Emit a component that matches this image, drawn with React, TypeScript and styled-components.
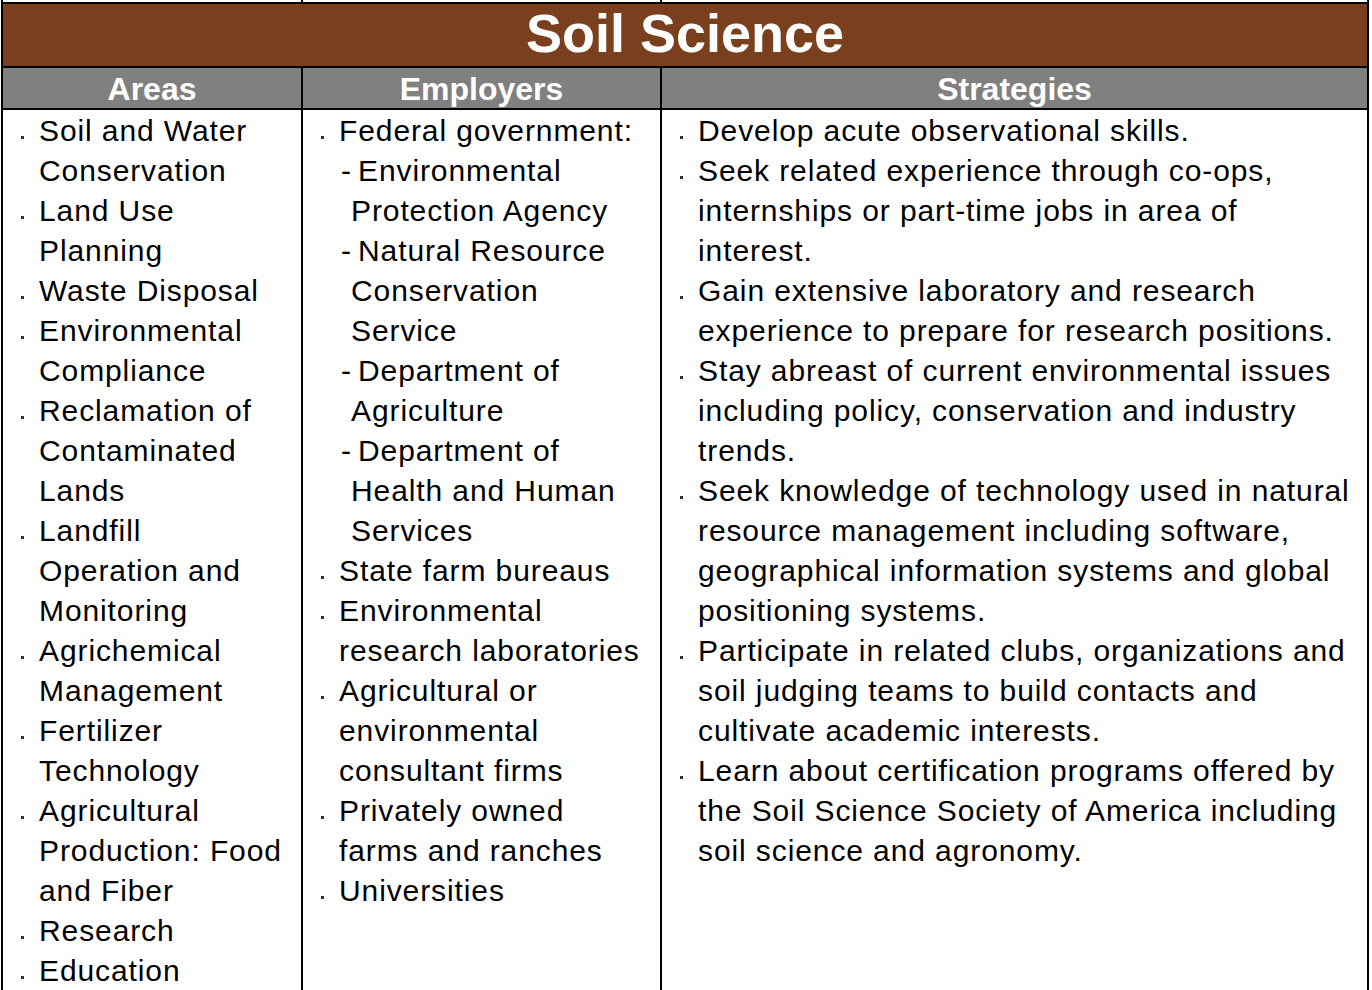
import styled, { createGlobalStyle } from 'styled-components'

type Entry = { lines: string[]; sub?: string[][] }

const areas: Entry[] = [
  { lines: ['Soil and Water', 'Conservation'] },
  { lines: ['Land Use', 'Planning'] },
  { lines: ['Waste Disposal'] },
  { lines: ['Environmental', 'Compliance'] },
  { lines: ['Reclamation of', 'Contaminated', 'Lands'] },
  { lines: ['Landfill', 'Operation and', 'Monitoring'] },
  { lines: ['Agrichemical', 'Management'] },
  { lines: ['Fertilizer', 'Technology'] },
  { lines: ['Agricultural', 'Production: Food', 'and Fiber'] },
  { lines: ['Research'] },
  { lines: ['Education'] },
]

const employers: Entry[] = [
  {
    lines: ['Federal government:'],
    sub: [
      ['Environmental', 'Protection Agency'],
      ['Natural Resource', 'Conservation', 'Service'],
      ['Department of', 'Agriculture'],
      ['Department of', 'Health and Human', 'Services'],
    ],
  },
  { lines: ['State farm bureaus'] },
  { lines: ['Environmental', 'research laboratories'] },
  { lines: ['Agricultural or', 'environmental', 'consultant firms'] },
  { lines: ['Privately owned', 'farms and ranches'] },
  { lines: ['Universities'] },
]

const strategies: Entry[] = [
  { lines: ['Develop acute observational skills.'] },
  { lines: ['Seek related experience through co-ops,', 'internships or part-time jobs in area of', 'interest.'] },
  { lines: ['Gain extensive laboratory and research', 'experience to prepare for research positions.'] },
  { lines: ['Stay abreast of current environmental issues', 'including policy, conservation and industry', 'trends.'] },
  {
    lines: [
      'Seek knowledge of technology used in natural',
      'resource management including software,',
      'geographical information systems and global',
      'positioning systems.',
    ],
  },
  { lines: ['Participate in related clubs, organizations and', 'soil judging teams to build contacts and', 'cultivate academic interests.'] },
  { lines: ['Learn about certification programs offered by', 'the Soil Science Society of America including', 'soil science and agronomy.'] },
]

const columns = [
  { title: 'Areas', items: areas },
  { title: 'Employers', items: employers },
  { title: 'Strategies', items: strategies },
]

function Lines({ lines }: { lines: string[] }) {
  return (
    <>
      {lines.map((l, i) => (
        <span key={i}>
          {i > 0 && <br />}
          {l}
        </span>
      ))}
    </>
  )
}

export default function App() {
  return (
    <>
      <GlobalStyle />
      <Page>
        <Table>
          <Strip>
            {columns.map((c, i) => (
              <StripCell key={c.title} $first={i === 0} />
            ))}
          </Strip>
          <Title>Soil Science</Title>
          <HeaderRow>
            {columns.map((c, i) => (
              <HeaderCell key={c.title} $first={i === 0}>{c.title}</HeaderCell>
            ))}
          </HeaderRow>
          <BodyRow>
            {columns.map((c, i) => (
              <BodyCell key={c.title} $first={i === 0}>
                <List>
                  {c.items.map((item, j) => (
                    <Item key={j}>
                      <Marker><Dot /></Marker>
                      <ItemText>
                        <Lines lines={item.lines} />
                        {item.sub?.map((s, k) => (
                          <SubItem key={k}>
                            <Dash>-</Dash>
                            <Lines lines={s} />
                          </SubItem>
                        ))}
                      </ItemText>
                    </Item>
                  ))}
                </List>
              </BodyCell>
            ))}
          </BodyRow>
        </Table>
      </Page>
    </>
  )
}

const GlobalStyle = createGlobalStyle`
  html, body {
    margin: 0;
    padding: 0;
    background: #fff;
    overflow: hidden;
  }
  body {
    font-family: "Liberation Sans", Arial, sans-serif;
    color: #000;
  }
`

const Page = styled.div`
  padding-left: 1px;
  height: 990px;
  overflow: hidden;
`

const Table = styled.div`
  width: 1368px;
  box-sizing: border-box;
  border-left: 2px solid #000;
  border-right: 2px solid #000;
`

const Grid = styled.div`
  display: grid;
  grid-template-columns: 298px 359px 1fr;
`

const Strip = styled(Grid)`
  height: 2px;
`

const StripCell = styled.div<{ $first?: boolean }>`
  border-left: ${({ $first }) => ($first ? 'none' : '2px solid #000')};
`

const Title = styled.div`
  height: 62px;
  background: #7a3f1d;
  border-top: 2px solid #000;
  border-bottom: 2px solid #000;
  color: #fff;
  font-weight: 700;
  font-size: 54px;
  line-height: 58px;
  text-align: center;
`

const HeaderRow = styled(Grid)`
  background: #808080;
  border-bottom: 2px solid #000;
`

const HeaderCell = styled.div<{ $first?: boolean }>`
  height: 40px;
  line-height: 42px;
  text-align: center;
  color: #fff;
  font-weight: 700;
  font-size: 32px;
  border-left: ${({ $first }) => ($first ? 'none' : '2px solid #000')};
`

const BodyRow = styled(Grid)`
  min-height: 900px;
`

const BodyCell = styled.div<{ $first?: boolean }>`
  padding: 1px 0 0 17px;
  border-left: ${({ $first }) => ($first ? 'none' : '2px solid #000')};
`

const List = styled.ul`
  list-style: none;
  margin: 0;
  padding: 0;
`

const Item = styled.li`
  display: grid;
  grid-template-columns: 19px auto;
  font-size: 30px;
  line-height: 40px;
  letter-spacing: 0.9px;
  white-space: nowrap;
`

const Marker = styled.span`
  display: flex;
  justify-content: flex-start;
`

const Dot = styled.span`
  width: 3px;
  height: 3px;
  margin: 25px 0 0 1px;
  background: #333;
`

const ItemText = styled.div``

const SubItem = styled.div`
  padding-left: 12px;
  text-indent: -10px;
`

const Dash = styled.span`
  display: inline-block;
  width: 17px;
  text-indent: 0;
  letter-spacing: 0;
`
